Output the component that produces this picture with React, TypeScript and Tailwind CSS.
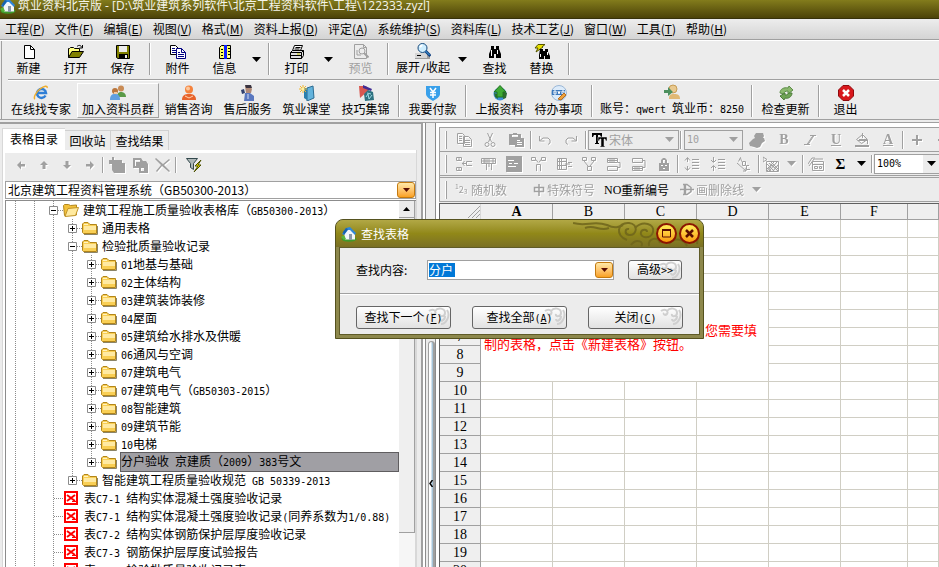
import React from "react";

const GRAY = "#a0a0a0";

// Latin runs are set in a half-width monospace face beside the full-width characters
const Mixed = (props: { text: string }) => (
    <>
        {props.text.split(/([\x20-\x7e]+)/).filter(Boolean).map((part, i) => (
            /^[\x20-\x7e]/.test(part)
                ? <span key={i} className="whitespace-pre font-['DejaVu_Sans_Mono',monospace] text-[10px]">{part}</span>
                : part
        ))}
    </>
);

const Svg = (props: { w?: number, h?: number, className?: string, children: React.ReactNode }) => {
    const w = props.w ?? 16;
    const h = props.h ?? 16;
    return (
        <svg width={w} height={h} viewBox={`0 0 ${w} ${h}`} fill="none" aria-hidden="true"
             className={`shrink-0 ${props.className ?? ""}`}>
            {props.children}
        </svg>
    );
};

const HouseIcon = () => (
    <Svg>
        <ellipse cx="8" cy="13" rx="7.5" ry="2.8" fill="#3f9a2c"/>
        <path d="M3 7l5-5 6 5v6.500H4z" fill="#f2f6fa"/>
        <path d="M1 8l4-6 4-1 6 6-1 2-5-5-2 0-4 5z" fill="#2f86d8"/>
        <path d="M2 6l3-4 2 1-4 6z" fill="#1862ad"/>
        <path d="M8 8h3v6H8z" fill="#8b99a8"/>
        <path d="M0 11l3-2 2 4-2 1z" fill="#58b63c"/>
    </Svg>
);

const NewIcon = () => (
    <Svg>
        <path d="M3.500 1.500h6l4 4v9h-10z" fill="#fff" stroke="#000"/>
        <path d="M9.500 1.500v4h4" stroke="#000"/>
    </Svg>
);

const OpenIcon = () => (
    <Svg>
        <path d="M.5 13.500v-9h1l1-1h3l1 1h5v3" fill="#ffff80" stroke="#000"/>
        <path d="M.5 13.500l3.500-6h11.500l-4 6z" fill="#808000" stroke="#000"/>
        <path d="M9 2.500c2-2 4-1 5 1M14.500 1v3h-3" stroke="#000"/>
    </Svg>
);

const SaveIcon = () => (
    <Svg>
        <path d="M1.500 1.500h13v13H3l-1.500-1z" fill="#808000" stroke="#000"/>
        <path d="M4 2h8v6H4z" fill="#ececec"/>
        <path d="M4 10h9v4H4z" fill="#000"/>
        <path d="M10 11h2v3h-2z" fill="#ececec"/>
    </Svg>
);

const AttachIcon = () => (
    <Svg>
        <path d="M.5 1.500h5l3 3v6h-8z" fill="#fff" stroke="#000"/>
        <path d="M2 4.500h3M2 6.500h5M2 8.500h5" stroke="#000080"/>
        <path d="M6.500 4.500h5l4 4v6h-9z" fill="#fff" stroke="#000080"/>
        <path d="M11.500 4.500v4h4M8 8.500h2M8 10.500h6M8 12.500h6" stroke="#000080"/>
    </Svg>
);

const InfoIcon = () => (
    <Svg>
        <path d="M2.500 3.500l2-2h9v13h-11z" fill="#ffff60" stroke="#000"/>
        <path d="M7 1h3v14H7z" fill="#1020ff"/>
        <path d="M4 5.500h2M4 8.500h2M4 11.500h2M11 4.500h2M11 7.500h2M11 10.500h2" stroke="#000"/>
        <path d="M4 3.500h2M11 12.500h2" stroke="#fff"/>
    </Svg>
);

const PrintIcon = () => (
    <Svg>
        <path d="M5.500 1.500h8l-2 5h-8z" fill="#fff" stroke="#000"/>
        <path d="M6.500 3.500h5M5.500 5h5" stroke="#000"/>
        <path d="M1.500 8.500l2-2h11v5l-2 3h-11z" fill="#e0e0e0" stroke="#000"/>
        <path d="M1.500 8.500h11l2-2M12.500 8.500v6M2 11.500h10" stroke="#000"/>
        <path d="M8 10h3" stroke="#c0c000"/>
    </Svg>
);

const PreviewIcon = () => (
    <Svg>
        <path d="M1.500.5h9l3 3v11h-12zM10.500.5v3h3" stroke={GRAY}/>
        <circle cx="9" cy="7" r="3" stroke={GRAY}/>
        <path d="M11 9l4.500 4.500" stroke={GRAY} strokeWidth="2"/>
        <path d="M4 6v5h4" stroke={GRAY}/>
    </Svg>
);

const ExpandIcon = () => (
    <Svg>
        <path d="M0 10h13l2 2v4H0z" fill="#9d9d9d"/>
        <path d="M0 10h12v5H0z" fill="#d5d5d5"/>
        <path d="M2 12.500h4" stroke="#000"/>
        <circle cx="7.500" cy="5" r="4.500" fill="#cfeeff" stroke="#15497c"/>
        <path d="M5 4l2-2" stroke="#fff" strokeWidth="2"/>
        <path d="M10.500 8l5 5" stroke="#104080" strokeWidth="3"/>
        <path d="M10.500 8l4 4" stroke="#45a7e8"/>
    </Svg>
);

const FindIcon = () => (
    <Svg>
        <path d="M4 2h3v3h2V2h3v3l2 5v4H9v-4H7v4H2v-4l2-5z" fill="#000"/>
        <path d="M4.500 6v6M10.500 6v4" stroke="#fff"/>
    </Svg>
);

const ReplaceIcon = () => (
    <Svg>
        <path d="M4 .5h7L8 3h1L2 8l2-4H1z" fill="#e8e000" stroke="#555500"/>
        <path d="M6 5h3v2h2V5h3v3l2 4v3h-5v-3h-1v3H5v-4z" fill="#000"/>
        <path d="M6.500 10v3M13.500 8v3" stroke="#fff"/>
    </Svg>
);

const IeIcon = () => (
    <Svg>
        <path d="M12.500 10.500a4.500 4.500 0 1 1 .5-2.500H5" stroke="#2f7fd6" strokeWidth="2.500"/>
        <path d="M2 14C0 13 3 7 7 4s8-4 7-1" stroke="#efae2d" strokeWidth="1.500"/>
    </Svg>
);

const GroupIcon = () => (
    <Svg>
        <circle cx="11" cy="3.500" r="3" fill="#c98b55"/>
        <path d="M7 12c0-4 2-5 4-5s5 1 5 5z" fill="#5a9a48"/>
        <circle cx="5" cy="6" r="3" fill="#b9763c"/>
        <path d="M4 7h3v2H4z" fill="#f2c9a0"/>
        <path d="M0 15c0-5 2-6 5-6s5 1 5 6z" fill="#5f9fe0"/>
    </Svg>
);

const SalesIcon = () => (
    <Svg>
        <circle cx="8" cy="4.500" r="4" fill="#f5823c"/>
        <circle cx="7" cy="3.500" r="2" fill="#fcc79c"/>
        <path d="M1 15c0-5 3-6 7-6s7 1 7 6z" fill="#e8622a"/>
        <path d="M4 11l4 2 4-2" stroke="#ffd2b0"/>
    </Svg>
);

const ServiceIcon = () => (
    <Svg>
        <path d="M5 1h5l2 3-1 4H6z" fill="#b08a78"/>
        <path d="M5 0h6l1 3H6z" fill="#3a3440"/>
        <path d="M5 8h5l4 3v5H4z" fill="#5a78c0"/>
        <path d="M1 5l3-1 1 4-3 1z" fill="#31406e"/>
        <path d="M8 9v5" stroke="#d8e0f5"/>
    </Svg>
);

const ClassIcon = () => (
    <Svg>
        <path d="M8 3l6-2 1 12-7 3z" fill="#63b3dc" stroke="#2c6c92"/>
        <path d="M5 3h3v12l-3-2z" fill="#2a7fae"/>
        <path d="M4 0v8M0 4h8M1 1l6 6M7 1L1 7" stroke="#f2b62e"/>
        <circle cx="4" cy="4" r="1.500" fill="#fff3a0"/>
    </Svg>
);

const TipsIcon = () => (
    <Svg>
        <path d="M1 1l7 0 3 4-9 8z" fill="#d9574f"/>
        <path d="M5 0l9 4-1 2L5 3z" fill="#3f2c93"/>
        <path d="M6 9l4-4 5 2 1 8-9 1z" fill="#2f7280"/>
        <path d="M9 8l4 1M8 12l2-3 1 5 3-4" stroke="#9fdbe6"/>
    </Svg>
);

const PayIcon = () => (
    <Svg>
        <path d="M1 1h14v8c0 3-4 5-7 7-3-2-7-4-7-7z" fill="#39a0ea"/>
        <path d="M5 3l3 4 3-4M8 7v6M5 7.500h6M5 10h6" stroke="#fff" strokeWidth="1.500"/>
    </Svg>
);

const UploadIcon = () => (
    <Svg>
        <circle cx="8" cy="9" r="6.500" fill="#3d8fd9"/>
        <path d="M2 8l3 1 1 5-3-2zM11 6l4 2-1 5-3 1z" fill="#2f6d2e"/>
        <path d="M8 .5L14 7h-3v5H5V7H2z" fill="#3faa33" stroke="#1e7520"/>
    </Svg>
);

const TodoIcon = () => (
    <Svg>
        <circle cx="8" cy="8" r="7.500" fill="#dcebfa" stroke="#9ab7d6"/>
        <path d="M1 5h13v5H1z" fill="#3b78bd"/>
        <path d="M3 6h2v3H3zM7 6l1 3 1-3M11 6h2v3h-2z" stroke="#fff"/>
        <path d="M7 14l6-6 2 2-5 5z" fill="#eea23c" stroke="#b56c1f"/>
    </Svg>
);

const AccountIcon = () => (
    <Svg>
        <circle cx="9" cy="5" r="4" fill="#e9c98f" stroke="#c79d55"/>
        <path d="M5 15c0-4 1-5 5-5s6 1 6 5z" fill="#e0b873"/>
        <path d="M0 6h4V3l5 5-5 4v-3H0z" fill="#4c8f5d"/>
    </Svg>
);

const UpdateIcon = () => (
    <Svg>
        <path d="M2 8c0-4 4-6 8-5l1-2 4 4-5 4v-3c-3 0-4 1-4 3z" fill="#8bb96e" stroke="#5d8d49"/>
        <path d="M14 8c0 4-4 6-7 5l-1 2-4-4 5-3v2c3 0 3-1 4-2z" fill="#6fa455" stroke="#4d7c3b"/>
    </Svg>
);

const ExitIcon = () => (
    <Svg>
        <path d="M5 .5h6L15.500 5v6L11 15.500H5L.5 11V5z" fill="#d8171c" stroke="#8f0b0e"/>
        <path d="M5 5l6 6M11 5l-6 6" stroke="#fff" strokeWidth="2.500"/>
    </Svg>
);

const FolderIcon = () => (
    <Svg className="mr-[3px]">
        <path d="M2 14.500h13.500V6" stroke="#8b8468"/>
        <path d="M.5 12.500V4L2 2.500h4l2 2h6.500v9h-13z" fill="#f9cf55" stroke="#b3861a"/>
        <path d="M2 6h12v4H2z" fill="#ffeaa3"/>
        <path d="M2 4.500h4" stroke="#fff3c2"/>
    </Svg>
);

const OpenFolderIcon = () => (
    <Svg className="mr-[3px]">
        <path d="M1.500 13.500l-1-10 1-1h4l2 1 6-.500v10z" fill="#f3c13a" stroke="#b3861a"/>
        <path d="M2 14.500l3-8 10.500-1-3 8z" fill="#ffeaa0" stroke="#c2952a"/>
    </Svg>
);

const TableFileIcon = () => (
    <Svg className="ml-px mr-[3px]">
        <path d="M1 2h12v12H1z" fill="#fff" stroke="#f00" strokeWidth="2"/>
        <path d="M3 5l8 6M11 5l-8 6" stroke="#f00" strokeWidth="2"/>
        <path d="M8 11.500h4" stroke="#f00"/>
    </Svg>
);

const Arrow = (props: { color?: string }) => (
    <Svg w={9} h={5}><path d="M0 0h9L4.500 5z" fill={props.color ?? "#000"}/></Svg>
);

const SwirlIcon = () => (
    <Svg w={24} h={20} className="absolute right-0 top-0">
        <path d="M3 4c4-3 8 0 6 3-2 2-4 0-3-1M9 4c3-4 10-3 10 2 0 4-6 4-5 1M21 3c4 6-1 14-6 14M19 9c0 5-5 6-5 3"
              stroke="#cfcfcf" strokeWidth="2"/>
    </Svg>
);

const TitleSwirl = () => (
    <Svg w={130} h={27} className="absolute right-0 top-0">
        <g stroke="#6f651c" strokeWidth="2" opacity=".85">
            <path d="M0 3c14 4 20-3 34 2 8 4 12 2 16 0M12 8c10-4 14 4 24 0"/>
            <path d="M54 20c-12-4-10-18 2-17 10 1 8 13 0 12-5-1-4-7 0-6"/>
            <path d="M62 8c8-8 20-4 18 4-2 8-14 6-12 0 1-3 6-3 6 0"/>
            <path d="M58 25c6-8 14-2 10 1M76 26c-2-8 10-10 11-3M84 10c4-8 12-6 14-2"/>
            <path d="M96 24c6-8 16-4 18 2M116 6c6 2 10 8 8 18"/>
        </g>
    </Svg>
);

const menus: [string, string][] = [
    ["工程", "P"], ["文件", "F"], ["编辑", "E"], ["视图", "V"], ["格式", "M"], ["资料上报", "D"], ["评定", "A"],
    ["系统维护", "S"], ["资料库", "L"], ["技术工艺", "J"], ["窗口", "W"], ["工具", "T"], ["帮助", "H"],
];

const Sep = (props: { className?: string }) => (
    <span className={`flex shrink-0 justify-center ${props.className ?? "h-8 w-2"}`}>
        <span className="h-full border-l border-[#a0a0a0] border-r border-r-white"/>
    </span>
);

const Tool = (props: { label: string, icon: React.ReactNode, className?: string, disabled?: boolean }) => (
    <button disabled={props.disabled}
            className={`flex shrink-0 flex-col items-center whitespace-nowrap leading-[15px] ${props.disabled ? "text-[#a0a0a0]" : ""} ${props.className ?? "w-[47px]"}`}>
        {props.icon}
        <span><Mixed text={props.label}/></span>
    </button>
);

const ToolArrow = () => (
    <button aria-label="更多" className="flex w-[17px] shrink-0 justify-center"><Arrow/></button>
);

const MainToolbar = () => (
    <div className="flex h-[38px] items-center pb-[2px] pl-[3px]">
        <Tool label="新建" icon={<NewIcon/>}/>
        <Tool label="打开" icon={<OpenIcon/>}/>
        <Tool label="保存" icon={<SaveIcon/>}/>
        <Sep/>
        <Tool label="附件" icon={<AttachIcon/>}/>
        <Tool label="信息" icon={<InfoIcon/>}/>
        <ToolArrow/>
        <Sep/>
        <Tool label="打印" icon={<PrintIcon/>}/>
        <ToolArrow/>
        <Tool label="预览" icon={<PreviewIcon/>} disabled/>
        <Sep/>
        <Tool label="展开/收起" icon={<ExpandIcon/>} className="w-[62px]"/>
        <ToolArrow/>
        <Tool label="查找" icon={<FindIcon/>}/>
        <Tool label="替换" icon={<ReplaceIcon/>}/>
        <Sep/>
    </div>
);

const ServiceToolbar = () => (
    <div className="flex h-[38px] items-center pl-[3px] pt-px">
        <Tool label="在线找专家" icon={<IeIcon/>} className="w-[72px]"/>
        <Tool label="加入资料员群" icon={<GroupIcon/>}
              className="h-[35px] w-[82px] justify-center border border-white border-b-[#a0a0a0] border-r-[#a0a0a0]"/>
        <Tool label="销售咨询" icon={<SalesIcon/>} className="w-[59px]"/>
        <Tool label="售后服务" icon={<ServiceIcon/>} className="w-[59px]"/>
        <Tool label="筑业课堂" icon={<ClassIcon/>} className="w-[59px]"/>
        <Tool label="技巧集锦" icon={<TipsIcon/>} className="w-[59px]"/>
        <Sep/>
        <Tool label="我要付款" icon={<PayIcon/>} className="w-[59px]"/>
        <Sep/>
        <Tool label="上报资料" icon={<UploadIcon/>} className="w-[59px]"/>
        <Tool label="待办事项" icon={<TodoIcon/>} className="w-[59px]"/>
        <Sep/>
        <Tool label="账号：qwert 筑业币：8250" icon={<AccountIcon/>} className="w-[152px]"/>
        <Sep/>
        <Tool label="检查更新" icon={<UpdateIcon/>} className="w-[59px]"/>
        <Sep/>
        <Tool label="退出" icon={<ExitIcon/>} className="w-[45px]"/>
    </div>
);

type TreeRow = { text: string, level: number, kind: "open" | "folder" | "file", minus?: boolean, last?: boolean, selected?: boolean };

const rows: TreeRow[] = [
    {text: "建筑工程施工质量验收表格库（GB50300-2013）", level: 0, kind: "open", minus: true},
    {text: "通用表格", level: 1, kind: "folder"},
    {text: "检验批质量验收记录", level: 1, kind: "folder", minus: true},
    {text: "01地基与基础", level: 2, kind: "folder"},
    {text: "02主体结构", level: 2, kind: "folder"},
    {text: "03建筑装饰装修", level: 2, kind: "folder"},
    {text: "04屋面", level: 2, kind: "folder"},
    {text: "05建筑给水排水及供暖", level: 2, kind: "folder"},
    {text: "06通风与空调", level: 2, kind: "folder"},
    {text: "07建筑电气", level: 2, kind: "folder"},
    {text: "07建筑电气（GB50303-2015）", level: 2, kind: "folder"},
    {text: "08智能建筑", level: 2, kind: "folder"},
    {text: "09建筑节能", level: 2, kind: "folder"},
    {text: "10电梯", level: 2, kind: "folder"},
    {text: "分户验收 京建质（2009）383号文", level: 2, kind: "folder", last: true, selected: true},
    {text: "智能建筑工程质量验收规范 GB 50339-2013", level: 1, kind: "folder", last: true},
    {text: "表C7-1 结构实体混凝土强度验收记录", level: 0, kind: "file"},
    {text: "表C7-1 结构实体混凝土强度验收记录(同养系数为1/0.88)", level: 0, kind: "file"},
    {text: "表C7-2 结构实体钢筋保护层厚度验收记录", level: 0, kind: "file"},
    {text: "表C7-3 钢筋保护层厚度试验报告", level: 0, kind: "file"},
    {text: "表C7-4 检验批质量验收记录表", level: 0, kind: "file"},
];

const Guide = () => (
    <Svg w={19} h={18}><path d="M9.500 0v18" stroke="#8c8c8c" strokeDasharray="1 1"/></Svg>
);

const Joint = (props: { row: TreeRow }) => (
    <Svg w={19} h={18}>
        <path d={props.row.last ? "M9.500 0v9" : "M9.500 0v18"} stroke="#8c8c8c" strokeDasharray="1 1"/>
        <path d="M10 9.500h9" stroke="#8c8c8c" strokeDasharray="1 1"/>
        {props.row.kind !== "file" && <>
            <path d="M5.500 5.500h8v8h-8z" fill="#fff" stroke="#8c8c8c"/>
            <path d={props.row.minus ? "M7 9.500h5" : "M7 9.500h5M9.500 7v5"} stroke="#000"/>
        </>}
    </Svg>
);

const Tree = () => (
    <ul className="min-w-0 flex-1 overflow-hidden">
        {rows.map((row) => (
            <li key={row.text} className="flex h-[18px] items-center whitespace-nowrap">
                {Array.from({length: row.level + 2}, (_, i) => <Guide key={i}/>)}
                <Joint row={row}/>
                {row.kind === "open" && <OpenFolderIcon/>}
                {row.kind === "folder" && <FolderIcon/>}
                {row.kind === "file" && <TableFileIcon/>}
                <span className={row.selected ? "flex-1 border border-[#5f5d5f] bg-[#a09fa4] leading-4" : "pl-px"}>
                    <Mixed text={row.text}/>
                </span>
            </li>
        ))}
    </ul>
);

const GoldButton = (props: { label: string }) => (
    <button aria-label={props.label}
            className="flex h-4 w-[18px] shrink-0 items-center justify-center rounded-[3px] border border-[#c47a10] bg-linear-to-b from-[#ffe9a6] to-[#f9a11c]">
        <Svg w={7} h={4}><path d="M0 0h7L3.500 4z" fill="#5a0d00"/></Svg>
    </button>
);

const NavButton = (props: { label: string, path: string }) => (
    <button aria-label={props.label} disabled
            className="flex w-[23px] shrink-0 justify-center drop-shadow-[1px_1px_0_#fff]">
        <Svg><path d={props.path} fill={GRAY} fillRule="evenodd"/></Svg>
    </button>
);

const Sidebar = () => (
    <aside className="flex w-[423px] shrink-0 flex-col border-r-2 border-t border-[#a0a0a0] pl-[2px] pr-[4px] pt-1">
        <div role="tablist" className="flex h-[22px] shrink-0 items-end leading-[18px]">
            <button role="tab" aria-selected="true" className="h-[22px] w-[63px] border-l border-t border-[#d8d8d8] bg-white pb-[2px]">
                表格目录
            </button>
            <button role="tab" aria-selected="false" className="h-5 w-[46px] border-r border-t border-[#d0d0d0]">回收站</button>
            <button role="tab" aria-selected="false" className="h-5 w-[58px] border-r border-t border-[#d0d0d0]">查找结果</button>
        </div>
        <div className="flex min-h-0 flex-1 flex-col border-l border-r border-[#d8d8d8] bg-white pl-[2px] pt-[3px]">
            <div className="flex h-[28px] shrink-0 items-center bg-[#ececec] pb-1 pl-1">
                <NavButton label="后退" path="M4 8l4-4v3h4v2.500H8v3z"/>
                <NavButton label="上移" path="M8 4l4 4H9.500v4h-3V8H4z"/>
                <NavButton label="下移" path="M8 12L4 8h2.500V4h3v4H12z"/>
                <NavButton label="前进" path="M12 8L8 4v3H4v2.500h4v3z"/>
                <Sep className="h-4 w-1"/>
                <NavButton label="新建" path="M0 3h3V0h2v3h8v3h3v10H5L3 13V7H0z"/>
                <NavButton label="复制" path="M1 1h8l2 3h3l2 3v9H7v-5H1zM3 3v6h1V5h4V3zM9 11v3h3v-3z"/>
                <NavButton label="删除" path="M1 1l7 6 6-5 1 1-6 5 6 6-1 1-7-6-5 6-1-1 5-6-6-6z"/>
                <Sep className="h-4 w-1"/>
                <button aria-label="筛选" className="flex w-8 justify-center">
                    <Svg>
                        <path d="M.5 1.500h11l-4 5v6l-3-2v-4z" fill="#aeb8b8" stroke="#33484c"/>
                        <path d="M15 3L9 9h3l-4 6 7-7h-3z" fill="#f4ec00" stroke="#4b5000"/>
                    </Svg>
                </button>
            </div>
            <div className="flex h-[18px] shrink-0 items-center border border-[#a0a0a0] bg-white">
                <select aria-label="资料管理系统" className="min-w-0 flex-1 appearance-none bg-white px-[2px] leading-4 outline-none">
                    <option>北京建筑工程资料管理系统（GB50300-2013）</option>
                </select>
                <GoldButton label="展开列表"/>
            </div>
            <div className="mt-px flex min-h-0 flex-1 border-l border-t border-[#8c8c8c]">
                <Tree/>
                <div className="flex w-[17px] shrink-0 flex-col border-r border-[#d8d8d8] bg-[#f6f6f6]">
                    <button aria-label="向上滚动"
                            className="flex h-[17px] items-center justify-center border-b border-r border-[#a0a0a0] bg-[#ececec]">
                        <Svg w={7} h={4}><path d="M0 4h7L3.500 0z" fill="#000"/></Svg>
                    </button>
                    <div className="h-[86%] border-b border-r border-[#a0a0a0] bg-[#efefef]"/>
                </div>
            </div>
        </div>
    </aside>
);

const Splitter = () => (
    <div className="flex w-3 shrink-0 flex-col border-l-2 border-white bg-[#ececec]">
        <div className="flex flex-1 flex-col border-l border-[#8c8c8c]">
            <button aria-label="折叠目录"
                    className="ml-[2px] mt-[218px] flex flex-1 justify-center rounded-t border-l border-r-2 border-t border-[#a0a0a0] bg-linear-to-r from-white from-40% to-[#8fb6d0] pt-[138px]">
                <Svg w={4} h={7}><path d="M3.500 0L1 3.500 3.500 7" stroke="#000" strokeWidth="1.500"/></Svg>
            </button>
        </div>
    </div>
);

const Glyph = (props: { label: string, w?: string, solid?: boolean, d?: string, children?: React.ReactNode }) => (
    <button aria-label={props.label} disabled
            className={`flex shrink-0 items-center justify-center text-[#a0a0a0] drop-shadow-[1px_1px_0_#fff] ${props.w ?? "w-[26px]"}`}>
        {props.d && <Svg>
            <path d={props.d} stroke={props.solid ? "none" : GRAY} fill={props.solid ? GRAY : "none"} fillRule="evenodd"/>
        </Svg>}
        {props.children}
    </button>
);

const Grip = () => (
    <span className="ml-[5px] mr-[4px] h-[18px] w-[2px] shrink-0 border-l border-white border-r border-r-[#a0a0a0]"/>
);

const SheetToolbars = () => (
    <div className="shrink-0 overflow-hidden whitespace-nowrap border border-r-0 border-[#a0a0a0]">
        <div className="flex h-6 items-center border-b border-[#a0a0a0]">
            <Grip/>
            <Glyph label="复制" d="M1.500 1.500h5l2 2v8h-7zM3 4.500h3M3 6.500h3M3 8.500h3M7.500 4.500h5l3 3v7h-8zM9 8.500h5M9 10.500h5M9 12.500h5"/>
            <Glyph label="剪切" d="M5.500 1l4 9M10.500 1l-4 9M3 12.500a2 2 0 1 0 4 0a2 2 0 1 0-4 0M9 12.500a2 2 0 1 0 4 0a2 2 0 1 0-4 0"/>
            <Glyph label="粘贴" solid d="M1 2h4V1h4v1h4v4h3v9H7v-2H1zM4 3v2h6V3zM9 8h3v1H9zM9 10h5v1H9zM9 12h5v1H9z"/>
            <Sep className="h-[18px] w-[3px]"/>
            <Glyph label="撤销" d="M2.500 4v5h5M3 8.500l3-2.500h5l2 2v3l-2 1.500"/>
            <Glyph label="重做" d="M13.500 4v5h-5M13 8.500L10 6H5L3 8v3l2 1.500"/>
            <Sep className="h-[18px] w-[3px]"/>
            <label className="ml-px flex h-5 w-[91px] shrink-0 items-center border border-[#a0a0a0] pl-[3px] pr-1">
                <Svg className="mr-px">
                    <path d="M0 1h10v4H9L8 3H6v8h1v1H3v-1h1V3H2L1 5H0z" fill="#000"/>
                    <path d="M6 5h9v4h-1l-1-2h-1v7h1v1H8v-1h1V7H8L7 9H6z" fill="#000" stroke="#ececec" strokeWidth=".5"/>
                </Svg>
                <select aria-label="字体" disabled className="min-w-0 flex-1 appearance-none text-[#a0a0a0] opacity-100">
                    <option>宋体</option>
                </select>
                <Arrow color={GRAY}/>
            </label>
            <Sep className="h-[18px] w-[3px]"/>
            <label className="ml-[2px] flex h-5 w-[59px] shrink-0 items-center border border-[#a0a0a0] pl-[2px] pr-1">
                <select aria-label="字号" disabled
                        className="min-w-0 flex-1 appearance-none font-['DejaVu_Sans_Mono',monospace] text-[10px] text-[#a0a0a0] opacity-100">
                    <option>10</option>
                </select>
                <Arrow color={GRAY}/>
            </label>
            <Glyph label="格式刷" solid w="w-7" d="M7 1h7l1 3-1 2h1l1 3-3 2-2 4-3 1-3-1-4-1-1-3 4-4 2-1-1-2z"/>
            <Glyph label="加粗"><b className="font-['Liberation_Serif',serif] text-[14px]">B</b></Glyph>
            <Glyph label="倾斜" d="M8 3.500h6M2 12.500h6M11 3.500l-6 9M12 3.500l-6 9"/>
            <Glyph label="下划线"><b className="font-['Liberation_Serif',serif] text-[14px] underline">U</b></Glyph>
            <Glyph label="填充" d="M2.500 7.500l6-5 5 5-6 4zM8.500 1v5M4 8.500h9M5 7.500h8M13.500 8v4M1 13.500h14M1 14.500h14"/>
            <Glyph label="字色"><b className="font-['Liberation_Serif',serif] text-[14px] underline">A</b></Glyph>
            <Sep className="h-[18px] w-[3px]"/>
            <Glyph label="放大" solid d="M7 3h2v4h4v2H9v4H7V9H3V7h4z"/>
            <Glyph label="缩小" solid d="M3 7h10v2H3z"/>
        </div>
        <div className="flex h-6 items-center border-b border-[#a0a0a0]">
            <Grip/>
            <Glyph w="w-[25px]" label="插入单元格" d="M.5 1.500h5v3h-5zM.5 11.500h5v3h-5zM2 3h2M2 13h2M6 7.500h4M8.500 5l-2 2.500 2 2.500M16 5.500h-5.500v4H16"/>
            <Glyph w="w-[25px]" label="删除单元格" d="M.5 2.500h14v5H.5zM.5 5h14M4 2v5M8 2v5M12 2v5M5.500 8v6M10.500 8v6M8 8v3M3 2v5M6 2v5"/>
            <Glyph w="w-[25px]" label="单元格属性" solid d="M0 0h16v16H0zM2 4v1h6V4zM3 7v1h3V7zM8 7v1h4V7zM2 10v1h8v-1z"/>
            <Glyph w="w-[25px]" label="拆分" d="M.5 1.500h4v3h-4zM10.500 1.500h4v3h-4zM5 3.500l2 3M10 3.500l-2 3M5.500 15V8.500h4V15"/>
            <Glyph w="w-[25px]" label="插入行" d="M1.500 2.500h9v11h-9zM1.500 5.500h9M1.500 9.500h9M5.500 2v11M3.500 2v11M12 6.500h4M12 10.500h4M9 8h5"/>
            <Glyph w="w-[25px]" label="合并" d="M1.500 1.500h4v3h-4zM10.500 1.500h4v3h-4zM3 5l4 5M13 5l-4 5M6.500 10.500h4v4h-4z"/>
            <Glyph w="w-[25px]" label="上填充" d="M1.500 2.500h10v4h-10zM1.500 10.500h10v4h-10zM2 4.500h9M4 3v3M6 3v3M8 3v3M12 6.500h2v5h-2"/>
            <Glyph w="w-[25px]" label="下填充" d="M1.500 2.500h10v4h-10zM1.500 10.500h10v4h-10zM2 12.500h9M4 11v3M6 11v3M8 11v3M12 4.500h2v7h-2"/>
            <Glyph w="w-[25px]" label="锁定" solid d="M5 7V4l2-2h2l2 2v3h2v8H3V7zM7 7h2V4H7zM5 9v1h2V9zM9 9v1h2V9zM7 12v1h2v-1z"/>
            <Sep className="h-[18px] w-[3px]"/>
            <Glyph label="增加行距" d="M3.500 2v4M3.500 10v4M1 4.500l2.500-3L6 4.500M1 11.500l2.500 3 2.500-3M8 3.500h7M8 6.500h7M8 9.500h7M8 12.500h7"/>
            <Glyph label="减少行距" d="M3.500 1v5M3.500 10v5M1 4l2.500 2.500L6 4M1 12l2.500-2.500L6 12M8 3.500h7M8 6.500h7M8 9.500h7M8 12.500h7"/>
            <Glyph label="文字方向" d="M2.500 5.500l2-4 1 4M6.500 5.500h3v4h-3zM13 9.500h-2.500v4H14M1 7l9 8M10 12v3H7"/>
            <Sep className="h-[18px] w-[3px]"/>
            <Glyph w="w-[22px]" label="图片" d="M0 1l4 2.500L0 6zM3.500 5.500h12v10h-12zM4 15l5-6 6 6M6 7l8 7M5 11l3 4M11 6l-7 7M8 6l7 7M14 6L6 15M15 9l-5 6M4 8l7 7"/>
            <Glyph w="w-[19px]" label="图片选项"><Arrow color={GRAY}/></Glyph>
            <Sep className="h-[18px] w-[3px]"/>
            <Glyph w="w-6" label="计算" d="M4.500 5.500h11v9h-11zM4 8.500h11M6.500 10.500h3v2h-3zM11.500 10.500h2v2h-2zM0 8l4-6 3 0M1 10l5-7 4 0M10 3h5"/>
            <button aria-label="求和" className="w-[25px] shrink-0 font-['Liberation_Serif',serif] text-[15px] font-bold leading-5">Σ</button>
            <button aria-label="函数列表" className="flex w-[17px] shrink-0 justify-center"><Arrow/></button>
            <Sep className="h-[18px] w-[3px]"/>
            <label className="ml-px flex h-5 min-w-[64px] flex-1 items-center border border-r-0 border-[#a0a0a0] bg-white pl-[2px]">
                <select aria-label="缩放" className="min-w-0 flex-1 appearance-none font-['DejaVu_Sans_Mono',monospace] text-[10px]">
                    <option>100%</option>
                </select>
                <span className="flex h-full w-4 items-center justify-center bg-[#ececec]"><Arrow/></span>
            </label>
        </div>
        <div className="mt-px flex h-6 items-center border-t border-[#a0a0a0] text-[#a0a0a0]">
            <Grip/>
            <button disabled className="ml-1 flex w-[76px] shrink-0 items-center drop-shadow-[1px_1px_0_#fff]">
                <span className="flex w-4 items-center text-[9px]"><sup>1</sup>2<sub>3</sub></span>随机数
            </button>
            <button disabled className="flex w-[73px] shrink-0 items-center drop-shadow-[1px_1px_0_#fff]">
                <Svg><path d="M3.500 5.500h9v4h-9zM8 2v12" stroke={GRAY} strokeWidth="1.500"/></Svg>特殊符号
            </button>
            <button className="flex w-[75px] shrink-0 items-center text-black">
                <span className="w-[17px] font-['Liberation_Serif',serif]">NO</span>重新编号
            </button>
            <button disabled className="flex shrink-0 items-center gap-px drop-shadow-[1px_1px_0_#fff]">
                <Svg><path d="M4 2.500h4l4 3v4l-4 3H4M5.500 2v11M6.500 2v11M1 7.500h14" stroke={GRAY} strokeWidth="1.500"/></Svg>
                画删除线
            </button>
            <Glyph w="w-6" label="删除线选项"><Arrow color={GRAY}/></Glyph>
        </div>
    </div>
);

const columns = ["A", "B", "C", "D", "E", "F", ""];

const Sheet = () => (
    <div className="mt-px min-h-0 flex-1 overflow-hidden border-l border-t border-[#606060] bg-white">
        <table className="w-full table-fixed border-separate border-spacing-0 font-['Liberation_Serif',serif] text-[14px] leading-[14px]">
            <colgroup>
                <col className="w-[41px]"/>
                <col className="w-[72px]"/>
                <col className="w-[72px]"/>
                <col className="w-[72px]"/>
                <col className="w-[72px]"/>
                <col className="w-[72px]"/>
                <col className="w-[67px]"/>
                <col/>
            </colgroup>
            <thead>
            <tr className="h-4 bg-[#efefef]">
                <th className="border-b border-r border-b-[#a0a0a0] border-r-[#d8d8d8] p-0">
                    <Svg w={12} h={13} className="ml-auto">
                        <path d="M0 13L12 1M4 13l8-8M8 13l4-4" stroke={GRAY}/>
                    </Svg>
                </th>
                {columns.map((name, i) => (
                    <th key={i} className={`border-b border-r border-[#a0a0a0] p-0 ${i === 0 ? "font-bold" : "font-normal"}`}>{name}</th>
                ))}
            </tr>
            </thead>
            <tbody>
            {Array.from({length: 20}, (_, i) => i + 1).map((n) => (
                <tr key={n} className="h-[18px]">
                    <th className="border-b border-r border-[#a0a0a0] bg-[#efefef] p-0 font-normal">{n}</th>
                    {n === 5 && (
                        <td colSpan={4} rowSpan={5}
                            className="border-b border-r border-[#d0cec4] p-0 pl-[3px] font-['Noto_Sans_CJK_SC',sans-serif] text-[13px] text-[#f00]">
                            <p className="w-[273px] text-right">您需要填</p>
                            <p className="whitespace-nowrap">制的表格，点击《新建表格》按钮。</p>
                        </td>
                    )}
                    {columns.slice(n >= 5 && n <= 9 ? 4 : 0).map((_, i) => (
                        <td key={i} className="border-b border-r border-[#d0cec4] p-0"/>
                    ))}
                </tr>
            ))}
            </tbody>
        </table>
    </div>
);

const DialogButton = (props: { label: string, hotkey?: string, className: string }) => (
    <button
        className={`relative shrink-0 rounded-[3px] border border-[#666] bg-linear-to-b from-white to-[#e2e2e2] ${props.className}`}>
        <SwirlIcon/>
        <span className="relative">
            <Mixed text={props.label}/>
            {props.hotkey && <span className="font-['DejaVu_Sans_Mono',monospace] text-[10px]">(<u>{props.hotkey}</u>)</span>}
        </span>
    </button>
);

const RoundButton = (props: { label: string, children: React.ReactNode }) => (
    <button aria-label={props.label}
            className="relative flex h-[21px] w-[21px] items-center justify-center rounded-full border-2 border-[#8b1500] bg-linear-to-b from-[#ffee55] to-[#f89a08]">
        {props.children}
    </button>
);

const FindDialog = () => (
    <div role="dialog" aria-label="查找表格"
         className="absolute left-[335px] top-[219px] w-[369px] rounded-t-lg border border-[#55521f] bg-[#8d884c] px-[3px] pb-[3px]">
        <div className="relative mx-[-3px] flex h-[27px] items-center gap-1 overflow-hidden rounded-t-[7px] bg-linear-to-b from-[#b2a845] via-[#918818] to-[#7a7024] pl-[5px] pr-[3px] text-white">
            <TitleSwirl/>
            <HouseIcon/>
            <span className="flex-1">查找表格</span>
            <div className="flex gap-[2px]">
                <RoundButton label="最大化">
                    <Svg w={9} h={9}><path d="M.5 1h8v7h-8z" stroke="#5a0d00"/><path d="M0 1h9" stroke="#5a0d00" strokeWidth="2"/></Svg>
                </RoundButton>
                <RoundButton label="关闭">
                    <Svg w={9} h={9}><path d="M1 1l7 7M8 1L1 8" stroke="#5a0d00" strokeWidth="2.500"/></Svg>
                </RoundButton>
            </div>
        </div>
        <div className="border border-[#5f5b28] bg-[#ececec]">
            <div className="flex h-[46px] items-start border-b border-[#a0a0a0] pl-4 pr-[17px] pt-3">
                <label htmlFor="keyword" className="w-[71px] leading-5">查找内容:</label>
                <div className="flex h-5 flex-1 items-center border border-[#a0a0a0] bg-white">
                    <input id="keyword" defaultValue="分户" className="ml-px h-[14px] w-[26px] bg-[#0078d7] text-white outline-none"/>
                    <span className="flex-1"/>
                    <GoldButton label="历史记录"/>
                </div>
                <DialogButton label="高级>>" className="ml-[14px] h-5 w-[54px] leading-4"/>
            </div>
            <div className="flex items-center justify-between border-t border-white pb-[5px] pl-4 pr-4 pt-[11px]">
                <DialogButton label="查找下一个" hotkey="F" className="h-[23px] w-[95px] leading-5"/>
                <DialogButton label="查找全部" hotkey="A" className="h-[23px] w-[95px] leading-5"/>
                <DialogButton label="关闭" hotkey="C" className="h-[23px] w-[95px] leading-5"/>
            </div>
        </div>
    </div>
);

const App = () => {
    return (
        <div
            className="relative flex h-screen flex-col overflow-hidden bg-[#ececec] font-['Noto_Sans_CJK_SC',sans-serif] text-[12px] text-black">
            <header
                className="flex h-[19px] shrink-0 items-center gap-[2px] border-b border-[#37320a] bg-linear-to-b from-[#837c1c] to-[#4c4308] pb-[7px] font-['Open_Sans','Noto_Sans_CJK_SC',sans-serif] text-[#f4f4ea]">
                <HouseIcon/>
                <h1 className="whitespace-nowrap">筑业资料北京版 - [D:\筑业建筑系列软件\北京工程资料软件\工程\122333.zyzl]</h1>
            </header>
            <nav
                className="flex h-[21px] shrink-0 items-center gap-[10px] border-b border-[#a0a0a0] bg-linear-to-b from-[#ededed] to-[#d4d4d4] pl-[5px]">
                {menus.map(([name, key]) => (
                    <button key={key} className="shrink-0 whitespace-nowrap leading-4">{name}(<u>{key}</u>)</button>
                ))}
            </nav>
            <div className="shrink-0 border-b border-[#a0a0a0] border-t border-t-white">
                <div className="ml-px border-l border-[#a0a0a0]">
                    <MainToolbar/>
                    <div className="ml-[6px] border-b border-white border-t border-t-[#a0a0a0]"/>
                    <ServiceToolbar/>
                </div>
            </div>
            <main className="mt-[2px] flex min-h-0 flex-1 border-t border-[#a0a0a0]">
                <Sidebar/>
                <Splitter/>
                <section className="flex min-w-0 flex-1 flex-col border-l border-[#8c8c8c] bg-white pl-[3px] pt-1">
                    <div className="flex min-h-0 flex-1 flex-col bg-[#ececec]">
                        <SheetToolbars/>
                        <Sheet/>
                    </div>
                </section>
            </main>
            <FindDialog/>
        </div>
    );
};

export default App;
